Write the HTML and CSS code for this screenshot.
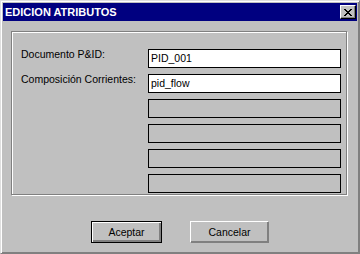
FILE: index.html
```html
<!DOCTYPE html>
<html lang="es">
<head>
    <meta charset="UTF-8">
    <title>EDICION ATRIBUTOS</title>
    <link rel="stylesheet" href="styles.css">
</head>
<body>
    <div class="window">
        <div class="titlebar">
            <span class="title">EDICION ATRIBUTOS</span>
            <button class="close" title="Cerrar">
                <svg width="8" height="7" viewBox="0 0 8 7">
                    <path d="M0 0h2v1h1v1h2v-1h1v-1h2v1h-1v1h-1v1h-1v1h1v1h1v1h1v1h-2v-1h-1v-1h-2v1h-1v1h-2v-1h1v-1h1v-1h1v-1h-1v-1h-1v-1h-1z" fill="#000"/>
                </svg>
            </button>
        </div>

        <div class="group">
            <label class="lbl">Documento P&amp;ID:</label>
            <div class="field">PID_001</div>

            <label class="lbl">Composición Corrientes:</label>
            <div class="field">pid_flow</div>

            <span></span>
            <div class="field disabled"></div>

            <span></span>
            <div class="field disabled"></div>

            <span></span>
            <div class="field disabled"></div>

            <span></span>
            <div class="field disabled"></div>
        </div>

        <div class="buttons">
            <button class="btn default">Aceptar</button>
            <button class="btn cancel">Cancelar</button>
        </div>
    </div>
</body>
</html>
```

FILE: styles.css
```css
body {
    margin: 0;
    font-family: "Liberation Sans", Arial, sans-serif;
    background-color: #c0c0c0;
}
.window {
    width: 360px;
    height: 254px;
    box-sizing: border-box;
    background-color: #c0c0c0;
    border: 1px solid;
    border-color: #dfdfdf #808080 #808080 #dfdfdf;
    box-shadow: inset 1px 1px #fff, inset -1px -1px #808080;
    padding: 2px 2px 2px 2px;
}
.titlebar {
    height: 18px;
    background-color: #000080;
    display: flex;
    align-items: center;
    justify-content: space-between;
    padding: 0 1px 0 2px;
}
.title {
    color: #fff;
    font-weight: bold;
    font-size: 11px;
    line-height: 18px;
}
.close {
    width: 16px;
    height: 14px;
    box-sizing: border-box;
    padding: 0;
    background-color: #c0c0c0;
    border: 1px solid;
    border-color: #fff #000 #000 #fff;
    box-shadow: inset -1px -1px #808080;
    display: flex;
    align-items: center;
    justify-content: center;
}
.group {
    width: 336px;
    height: 164px;
    box-sizing: border-box;
    margin: 10px 0 0 8px;
    border: 1px solid #808080;
    box-shadow: inset 1px 1px #fff, 1px 1px #fff;
    padding: 17px 5px 0 9px;
    display: grid;
    grid-template-columns: 1fr 193px;
    grid-auto-rows: 19px;
    row-gap: 6px;
}
.lbl {
    font-size: 10.5px;
    line-height: 12px;
    margin-top: -1px;
    color: #000;
}
.field {
    box-sizing: border-box;
    height: 19px;
    border: 1px solid #000;
    background-color: #fff;
    font-size: 10.5px;
    line-height: 17px;
    padding-left: 2px;
}
.field.disabled {
    background-color: #c0c0c0;
}
.buttons {
    display: flex;
    justify-content: center;
    gap: 28px;
    margin-top: 26px;
}
.btn {
    height: 22px;
    box-sizing: border-box;
    background-color: #c0c0c0;
    font-family: "Liberation Sans", Arial, sans-serif;
    font-size: 10.5px;
    color: #000;
    padding: 0;
}
.btn.default {
    width: 71px;
    border: 1px solid #000;
    box-shadow: inset 1px 1px #fff, inset -1px -1px #808080, inset -2px -2px #808080;
}
.btn.cancel {
    width: 79px;
    border: 1px solid;
    border-color: #fff #808080 #808080 #fff;
    box-shadow: inset -1px -1px #808080;
}
```
